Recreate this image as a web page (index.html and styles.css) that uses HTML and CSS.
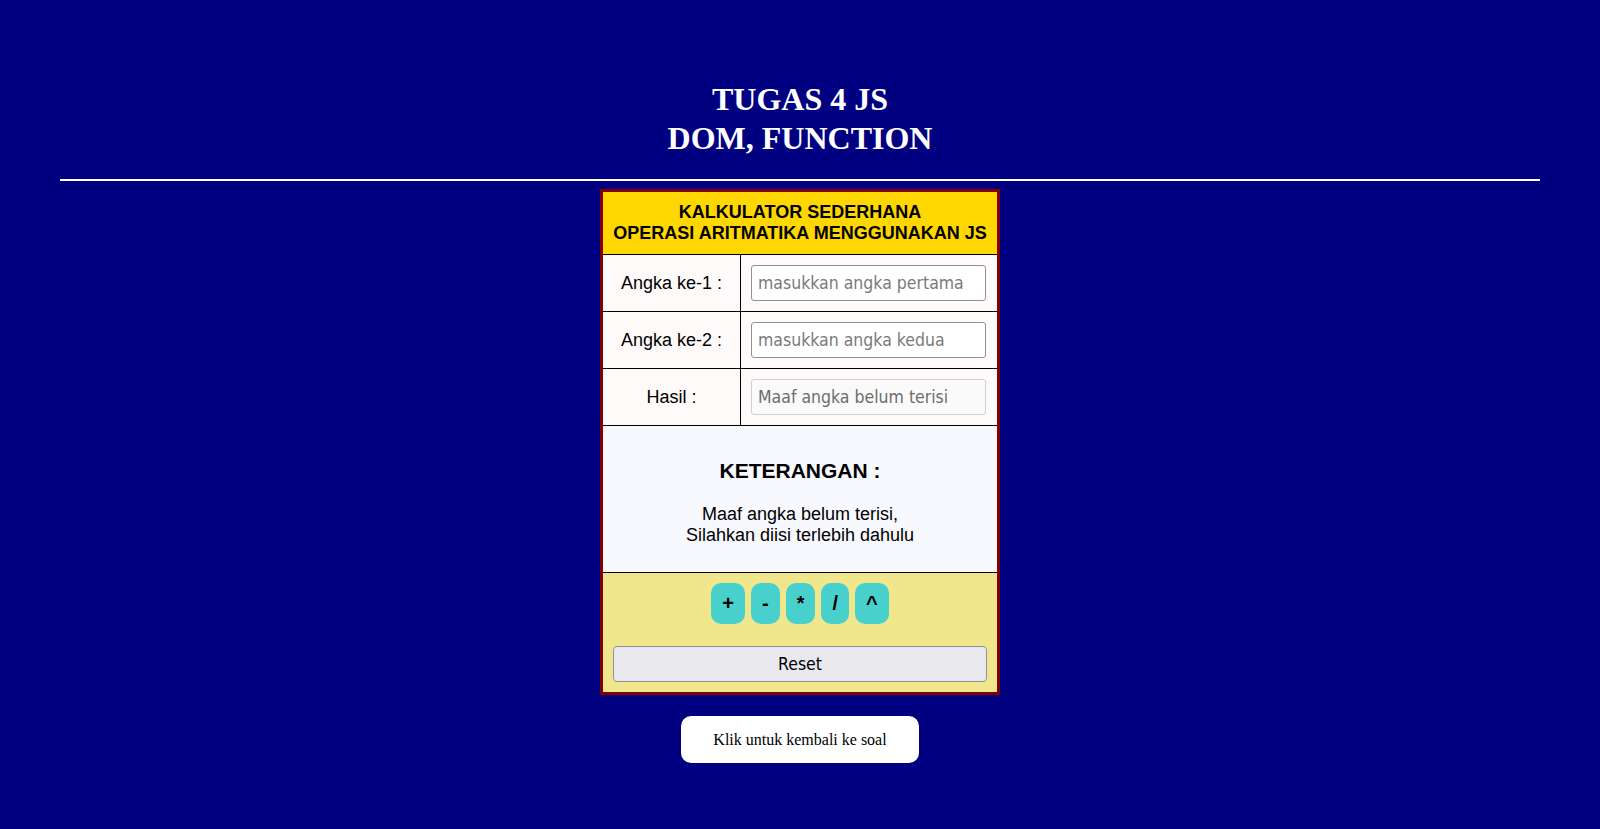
FILE: index.html
```html
<!DOCTYPE html>
<html lang="id">
<head>
<meta charset="utf-8">
<title>Tugas 4 JS</title>
<link rel="stylesheet" href="styles.css">
</head>
<body>
  <header class="page-head">
    <h1 class="title">TUGAS 4 JS<br>DOM, FUNCTION</h1>
    <hr class="divider">
  </header>
  <main class="main">
    <section class="calc">
      <div class="calc-head">KALKULATOR SEDERHANA<br>OPERASI ARITMATIKA MENGGUNAKAN JS</div>
      <div class="calc-row">
        <div class="calc-label">Angka ke-1 :</div>
        <div class="calc-field"><input class="field" type="number" placeholder="masukkan angka pertama"></div>
      </div>
      <div class="calc-row">
        <div class="calc-label">Angka ke-2 :</div>
        <div class="calc-field"><input class="field" type="number" placeholder="masukkan angka kedua"></div>
      </div>
      <div class="calc-row">
        <div class="calc-label">Hasil :</div>
        <div class="calc-field"><input class="field field-result" type="text" placeholder="Maaf angka belum terisi" disabled></div>
      </div>
      <div class="calc-info">
        <h3 class="info-title">KETERANGAN :</h3>
        <p class="info-text">Maaf angka belum terisi,<br>Silahkan diisi terlebih dahulu</p>
      </div>
      <div class="calc-actions">
        <div class="ops">
          <button class="op">+</button>
          <button class="op">-</button>
          <button class="op">*</button>
          <button class="op">/</button>
          <button class="op">^</button>
        </div>
        <button class="reset">Reset</button>
      </div>
    </section>
    <button class="back">Klik untuk kembali ke soal</button>
  </main>
</body>
</html>
```

FILE: styles.css
```css
html, body {
  margin: 0;
  padding: 0;
}
body {
  background: #000080;
  font-family: "Liberation Serif", "Times New Roman", serif;
  min-height: 829px;
}
.page-head {
  padding-top: 80px;
  display: flex;
  flex-direction: column;
  align-items: center;
}
.title {
  margin: 0;
  color: #ffffff;
  font-family: "Liberation Serif", "Times New Roman", serif;
  font-size: 32px;
  font-weight: bold;
  line-height: 39px;
  text-align: center;
}
.divider {
  width: 1480px;
  height: 2px;
  margin: 21px 0 0 0;
  border: 0;
  background: #ffffff;
}
.main {
  display: flex;
  flex-direction: column;
  align-items: center;
  padding-top: 8px;
}
.calc {
  width: 394px;
  border: 3px solid #800000;
  font-family: "Liberation Sans", Arial, sans-serif;
  color: #000;
}
.calc-head {
  background: #ffd700;
  font-weight: bold;
  font-size: 18px;
  line-height: 21px;
  text-align: center;
  padding: 10px 0 10px;
  border-bottom: 1px solid #000;
}
.calc-row {
  display: grid;
  grid-template-columns: 138px 1fr;
  background: #fffafa;
  border-bottom: 1px solid #000;
  height: 56px;
}
.calc-label {
  display: flex;
  align-items: center;
  justify-content: center;
  font-size: 18px;
  border-right: 1px solid #000;
}
.calc-field {
  display: flex;
  align-items: center;
  padding: 0 10px;
}
.field {
  box-sizing: border-box;
  width: 235px;
  height: 36px;
  border: 1px solid #8f8f9d;
  border-radius: 3px;
  background: #ffffff;
  padding: 0 6px;
  font-family: "DejaVu Sans Condensed", "DejaVu Sans", sans-serif;
  font-stretch: condensed;
  font-size: 17.5px;
  color: #000;
}
.field::placeholder {
  color: #7a7a7a;
}
.field-result {
  background: #fbfafa;
  border-color: #d0d0d4;
}
.field-result::placeholder {
  color: #6d6d6d;
}
.calc-info {
  background: #f8f8ff;
  border-bottom: 1px solid #000;
  height: 147px;
  box-sizing: border-box;
  padding-top: 33px;
  text-align: center;
}
.info-title {
  margin: 0;
  font-size: 21px;
  line-height: 24px;
  font-weight: bold;
}
.info-text {
  margin: 21px 0 0;
  font-size: 18px;
  line-height: 21px;
}
.calc-actions {
  background: #f0e68c;
  padding: 10px 10px 10px;
  display: flex;
  flex-direction: column;
  align-items: center;
}
.ops {
  display: flex;
  gap: 6px;
  justify-content: center;
}
.op {
  height: 41px;
  padding: 0 11px;
  border: 0;
  border-radius: 10px;
  background: #48d1cc;
  font-family: "Liberation Sans", Arial, sans-serif;
  font-weight: bold;
  font-size: 20px;
  color: #000;
}
.reset {
  margin-top: 22px;
  width: 374px;
  height: 36px;
  border: 1px solid #8f8f9d;
  border-radius: 4px;
  background: #e9e9ed;
  font-family: "DejaVu Sans Condensed", "DejaVu Sans", sans-serif;
  font-stretch: condensed;
  font-size: 17.5px;
  color: #000;
}
.back {
  margin-top: 21px;
  height: 47px;
  padding: 0 32px;
  border: 0;
  border-radius: 10px;
  background: #ffffff;
  font-family: "Liberation Serif", "Times New Roman", serif;
  font-size: 16px;
  color: #000;
}
```
